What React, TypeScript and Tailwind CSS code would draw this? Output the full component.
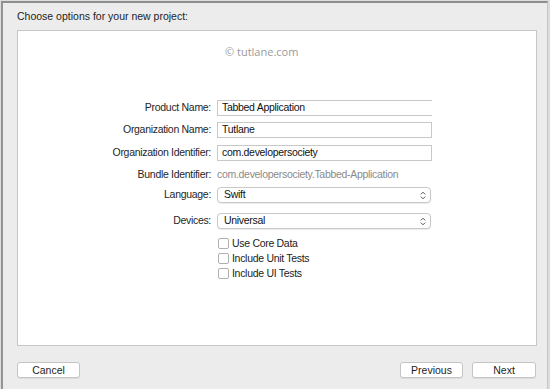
const FIELDS = [
  { label: "Product Name:", value: "Tabbed Application", open: true },
  { label: "Organization Name:", value: "Tutlane" },
  { label: "Organization Identifier:", value: "com.developersociety" },
];

const POPUPS = [
  { label: "Language:", value: "Swift" },
  { label: "Devices:", value: "Universal" },
];

const OPTIONS = ["Use Core Data", "Include Unit Tests", "Include UI Tests"];

function UpDown() {
  return (
    <svg width="6" height="9" viewBox="0 0 6 9" fill="none" stroke="#555" strokeWidth="1">
      <path d="M0.8 3.4 L3 1.2 L5.2 3.4" />
      <path d="M0.8 5.6 L3 7.8 L5.2 5.6" />
    </svg>
  );
}

function Button({ children, w }: { children: string; w: string }) {
  return (
    <button
      className={`${w} h-[16px] rounded-[3px] border border-[#c4c4c4] bg-white text-center text-[10.5px] leading-[14px] text-[#1e1e1e] shadow-[0_1px_0_rgba(0,0,0,0.06)]`}
    >
      {children}
    </button>
  );
}

export default function App() {
  return (
    <div
      className="h-[389px] w-[550px] overflow-hidden bg-[#dcdcdc] pl-px pt-px text-[#222]"
      style={{ fontFamily: '"Liberation Sans", Arial, sans-serif' }}
    >
      <div className="flex h-[388px] w-[547px] flex-col border-l-2 border-r border-t-2 border-l-[#949494] border-r-[#c6c6c6] border-t-[#8e8e8e] bg-[#ececec]">
        <div className="flex h-[27px] items-center pl-[14px] text-[10.5px] text-[#1e1e1e]">
          Choose options for your new project:
        </div>

        <div className="ml-[14px] h-[316px] w-[520px] border border-[#c6c6c6] bg-white">
          <p
            className="pl-[207px] pt-[14px] text-[11px] leading-[14px] text-[#9a9a9a]"
            style={{ fontFamily: '"Open Sans", sans-serif' }}
          >
            © tutlane.com
          </p>

          <div className="mt-[41px] grid grid-cols-[193px_215px] items-center gap-x-[6px] text-[10.5px] tracking-[-0.3px]">
            {FIELDS.map((f, i) => (
              <div key={f.label} className="contents">
                <div className={`text-right text-[#262626] ${i > 0 ? "mt-[6px]" : ""}`}>{f.label}</div>
                <div
                  className={`flex h-[16px] items-center border-[#c8c8c8] pl-[4px] text-[#111] ${
                    f.open ? "border-y border-l" : "border"
                  } ${i === 1 ? "mt-[6px]" : ""} ${i === 2 ? "mt-[7px]" : ""}`}
                >
                  {f.value}
                </div>
              </div>
            ))}

            <div className="mt-[6px] h-[14px] text-right leading-[14px] text-[#262626]">Bundle Identifier:</div>
            <div className="mt-[6px] h-[14px] leading-[14px] text-[#8a8a8a]">com.developersociety.Tabbed-Application</div>

            {POPUPS.map((p, i) => (
              <div key={p.label} className="contents">
                <div className={`text-right text-[#262626] ${i === 0 ? "mt-[6px]" : "mt-[10px]"}`}>{p.label}</div>
                <div
                  className={`flex h-[16px] w-[214px] items-center justify-between rounded-[4px] border border-[#c8c8c8] bg-white pl-[6px] pr-[4px] text-[#111] shadow-[0_1px_1px_rgba(0,0,0,0.08)] ${
                    i === 0 ? "mt-[6px]" : "mt-[10px]"
                  }`}
                >
                  <span>{p.value}</span>
                  <UpDown />
                </div>
              </div>
            ))}

            <div />
            <div className="mt-[7px] flex flex-col">
              {OPTIONS.map((o) => (
                <label key={o} className="flex h-[15px] items-center gap-[3px] pl-px text-[#222]">
                  <span className="h-[11px] w-[11px] rounded-[2px] border border-[#b0b0b0] bg-white" />
                  {o}
                </label>
              ))}
            </div>
          </div>
        </div>

        <div className="flex items-center pl-[14px] pr-[11px] pt-[16px]">
          <Button w="w-[63px]">Cancel</Button>
          <div className="flex-1" />
          <Button w="w-[63px]">Previous</Button>
          <div className="w-[9px]" />
          <Button w="w-[64px]">Next</Button>
        </div>
      </div>
    </div>
  );
}
